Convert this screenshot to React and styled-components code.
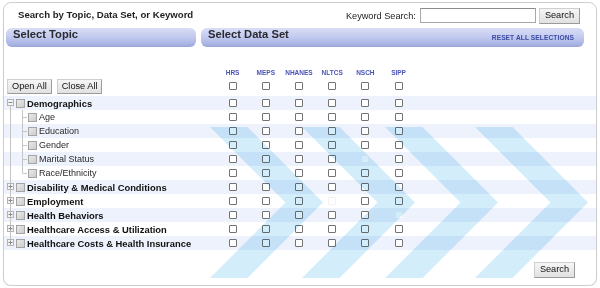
import React from 'react'
import styled, { createGlobalStyle } from 'styled-components'

const GlobalStyle = createGlobalStyle`
  html, body {
    margin: 0;
    padding: 0;
    background: #fff;
  }
  body {
    font-family: "Liberation Sans", Arial, sans-serif;
    color: #222;
  }
`

const DATASETS = ['HRS', 'MEPS', 'NHANES', 'NLTCS', 'NSCH', 'SIPP']

const TOPICS = [
  {
    label: 'Demographics',
    open: true,
    children: [
      { label: 'Age' },
      { label: 'Education' },
      { label: 'Gender' },
      { label: 'Marital Status', missing: ['NSCH'] },
      { label: 'Race/Ethnicity' },
    ],
  },
  { label: 'Disability & Medical Conditions' },
  { label: 'Employment', missing: ['NLTCS'] },
  { label: 'Health Behaviors', missing: ['SIPP'] },
  { label: 'Healthcare Access & Utilization' },
  { label: 'Healthcare Costs & Health Insurance' },
]

// flatten the tree into table rows
const ROWS = []
TOPICS.forEach((t, i) => {
  ROWS.push({ ...t, level: 0, first: i === 0, last: i === TOPICS.length - 1 })
  if (t.open && t.children) {
    t.children.forEach((c, j) => {
      ROWS.push({ ...c, level: 1, lastChild: j === t.children.length - 1 })
    })
  }
})

// chevrons, panel coordinates
const CHEVRONS = [206, 298, 381, 471]

const Panel = styled.div`
  position: relative;
  box-sizing: border-box;
  width: 594px;
  height: 284px;
  margin: 2px 0 0 3px;
  border: 1px solid #cdcdcd;
  border-radius: 8px;
  box-shadow: 0 1px 1px rgba(0, 0, 0, 0.08);
  overflow: hidden;
  display: flex;
  flex-direction: column;
`

const TopBar = styled.div`
  height: 25px;
  display: flex;
  align-items: center;
  justify-content: space-between;
  padding: 0 16px 0 14px;
`

const Title = styled.div`
  font-size: 9.6px;
  font-weight: bold;
  color: #1e1e1e;
  margin-top: -3px;
`

const KeywordForm = styled.div`
  display: flex;
  align-items: center;
  font-size: 9.2px;
  color: #222;
`

const KeywordInput = styled.input`
  box-sizing: border-box;
  width: 116px;
  height: 15px;
  margin: 0 3px 0 4px;
  padding: 0 2px;
  border: 1px solid #a8a8a8;
  border-top-color: #8c8c8c;
  background: #fff;
  font-size: 9px;
`

const Btn = styled.button`
  box-sizing: border-box;
  height: ${p => p.$h || 15}px;
  padding: 0 ${p => p.$px || 4}px;
  font-family: "Liberation Sans", Arial, sans-serif;
  font-size: 9.2px;
  color: #111;
  background: linear-gradient(#f6f6f6, #e1e1e1);
  border: 1px solid;
  border-color: #cfcfcf #9b9b9b #9b9b9b #cfcfcf;
  border-radius: 0;
  line-height: 1;
`

const BarRow = styled.div`
  display: flex;
  gap: 5px;
  padding: 0 12px 0 2px;
  height: 19px;
`

const Bar = styled.div`
  box-sizing: border-box;
  width: ${p => (p.$w ? `${p.$w}px` : 'auto')};
  flex: ${p => (p.$w ? 'none' : '1')};
  height: 19px;
  border-radius: 6px;
  background: linear-gradient(#d9def5 0%, #c3cbef 45%, #aab4e4 85%, #97a3da 100%);
  display: flex;
  align-items: flex-start;
  justify-content: space-between;
  padding: 0 10px 0 7px;
`

const BarTitle = styled.span`
  font-size: 11.2px;
  font-weight: bold;
  line-height: 13px;
  color: #2a2a30;
`

const ResetLink = styled.span`
  font-size: 6.6px;
  font-weight: bold;
  color: #3c4aa2;
  margin-top: 6px;
  letter-spacing: 0.1px;
`

const GRID = '212px repeat(6, 33.2px) 1fr'

const HeadArea = styled.div`
  display: grid;
  grid-template-columns: ${GRID};
  align-items: end;
  height: 49px;
`

const ButtonGroup = styled.div`
  display: flex;
  gap: 5px;
  padding: 0 0 2px 3px;
`

const DataHead = styled.div`
  display: flex;
  flex-direction: column;
  align-items: center;
  gap: 6px;
  padding-bottom: 6px;
`

const HeadLabel = styled.span`
  font-size: 6.5px;
  font-weight: bold;
  color: #4b53b6;
  line-height: 7px;
`

const Row = styled.div`
  display: grid;
  grid-template-columns: ${GRID};
  height: 14px;
  background: ${p => (p.$band ? '#edf2fc' : 'transparent')};
`

const TopicCell = styled.div`
  display: flex;
  align-items: center;
  height: 14px;
  white-space: nowrap;
`

const TopicLabel = styled.span`
  font-size: ${p => (p.$level ? '9px' : '9.4px')};
  font-weight: ${p => (p.$level ? 'normal' : 'bold')};
  color: ${p => (p.$level ? '#2a2a2a' : '#111')};
  margin-left: 2px;
`

const TopicBox = styled.span`
  box-sizing: border-box;
  width: 9px;
  height: 9px;
  border: 1px solid #a4a4a4;
  background: linear-gradient(135deg, #e9e9e9, #cdcdcd);
  flex: none;
`

const DataCell = styled.div`
  display: flex;
  align-items: center;
  justify-content: center;
`

const DataBox = styled.span`
  box-sizing: border-box;
  width: 8px;
  height: 8px;
  border: 1px solid ${p => (p.$ghost ? '#f1f1f1' : '#737373')};
  border-radius: 1px;
  background: #fff;
`

const Footer = styled.div`
  flex: 1;
  display: flex;
  justify-content: flex-end;
  align-items: flex-start;
  padding: 12px 21px 0 0;
`

const Chevrons = styled.svg`
  position: absolute;
  left: 0;
  top: 0;
  pointer-events: none;
  mix-blend-mode: multiply;
`

function TreeGlyph({ row }) {
  const w = row.level ? 24 : 12
  const trunkTop = row.level === 0 && row.first ? 7 : 0
  const trunkBottom = row.level === 0 && row.last ? 7 : 14
  return (
    <svg width={w} height="14" style={{ flex: 'none' }}>
      <line x1="6.5" y1={trunkTop} x2="6.5" y2={trunkBottom} stroke="#c4c4c4" />
      {row.level === 0 && (
        <g>
          <rect x="3.5" y="3.5" width="6" height="6" fill="#f4f4f4" stroke="#b3b3b3" />
          <line x1="4.5" y1="6.5" x2="8.5" y2="6.5" stroke="#8a8a8a" />
          {!row.open && <line x1="6.5" y1="4.5" x2="6.5" y2="8.5" stroke="#8a8a8a" />}
        </g>
      )}
      {row.level === 1 && (
        <g>
          <line x1="18.5" y1="0" x2="18.5" y2={row.lastChild ? 7 : 14} stroke="#c4c4c4" />
          <line x1="18.5" y1="7.5" x2="23" y2="7.5" stroke="#c4c4c4" />
        </g>
      )}
    </svg>
  )
}

function ChevronLayer() {
  const top = 124
  const mid = 199.5
  const bottom = 275
  return (
    <Chevrons width="592" height="282" viewBox="0 0 592 282">
      {CHEVRONS.map(l => (
        <polygon
          key={l}
          fill="#d4edfb"
          points={`${l},${top} ${l + 37.5},${top} ${l + 113},${mid} ${l + 37.5},${bottom} ${l},${bottom} ${l + 75.5},${mid}`}
        />
      ))}
    </Chevrons>
  )
}

export default function App() {
  return (
    <>
      <GlobalStyle />
      <Panel>
        <TopBar>
          <Title>Search by Topic, Data Set, or Keyword</Title>
          <KeywordForm>
            Keyword Search:
            <KeywordInput type="text" />
            <Btn $h={16} $px={5}>Search</Btn>
          </KeywordForm>
        </TopBar>

        <BarRow>
          <Bar $w={190}>
            <BarTitle>Select Topic</BarTitle>
          </Bar>
          <Bar>
            <BarTitle>Select Data Set</BarTitle>
            <ResetLink>RESET ALL SELECTIONS</ResetLink>
          </Bar>
        </BarRow>

        <HeadArea>
          <ButtonGroup>
            <Btn>Open All</Btn>
            <Btn>Close All</Btn>
          </ButtonGroup>
          {DATASETS.map(d => (
            <DataHead key={d}>
              <HeadLabel>{d}</HeadLabel>
              <DataBox />
            </DataHead>
          ))}
        </HeadArea>

        {ROWS.map((row, i) => (
          <Row key={row.label} $band={i % 2 === 0}>
            <TopicCell>
              <TreeGlyph row={row} />
              <TopicBox />
              <TopicLabel $level={row.level}>{row.label}</TopicLabel>
            </TopicCell>
            {DATASETS.map(d => (
              <DataCell key={d}>
                <DataBox $ghost={row.missing && row.missing.includes(d)} />
              </DataCell>
            ))}
          </Row>
        ))}

        <Footer>
          <Btn $h={16} $px={5}>Search</Btn>
        </Footer>

        <ChevronLayer />
      </Panel>
    </>
  )
}
